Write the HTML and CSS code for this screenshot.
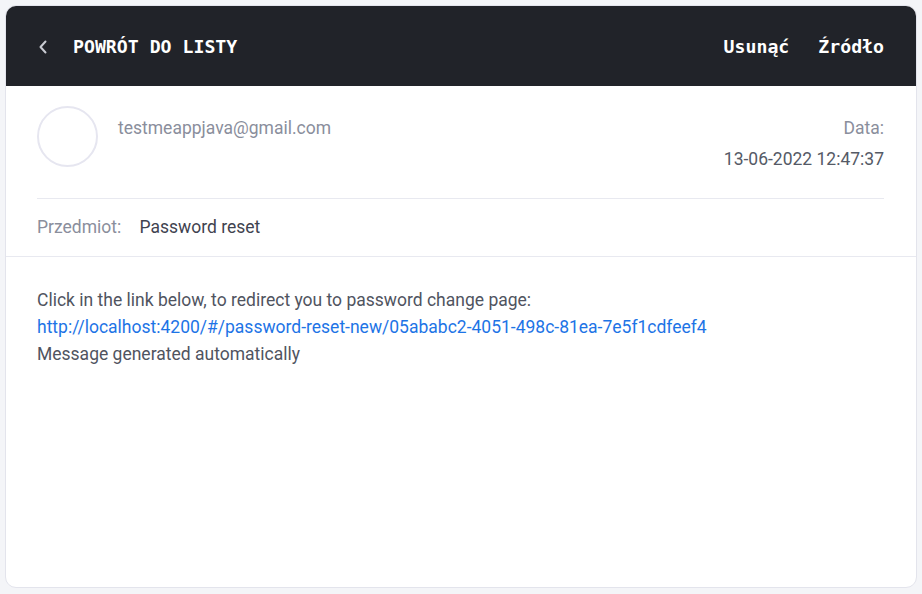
FILE: index.html
```html
<!DOCTYPE html>
<html lang="pl">
<head>
<meta charset="utf-8">
<title>Wiadomość</title>
<link rel="stylesheet" href="styles.css">
</head>
<body>
<div class="card">
  <header class="topbar">
    <a class="back" href="#">
      <svg class="chev" width="10" height="14" viewBox="0 0 10 14"><path d="M7.5 1.5 L2.5 7 L7.5 12.5" fill="none" stroke="#c9cbd2" stroke-width="2" stroke-linecap="round" stroke-linejoin="round"/></svg>
      <span>POWRÓT DO LISTY</span>
    </a>
    <nav class="actions">
      <a href="#">Usunąć</a>
      <a href="#">Źródło</a>
    </nav>
  </header>
  <section class="meta">
    <div class="sender">
      <div class="avatar"></div>
      <div class="from">testmeappjava@gmail.com</div>
      <div class="date">
        <div class="date-label">Data:</div>
        <div class="date-value">13-06-2022 12:47:37</div>
      </div>
    </div>
    <div class="subject">
      <span class="subject-label">Przedmiot:</span>
      <span class="subject-value">Password reset</span>
    </div>
  </section>
  <section class="message">
    <div>Click in the link below, to redirect you to password change page:</div>
    <div><a href="#">http://localhost:4200/#/password-reset-new/05ababc2-4051-498c-81ea-7e5f1cdfeef4</a></div>
    <div>Message generated automatically</div>
  </section>
</div>
</body>
</html>
```
FILE: styles.css
```css
html, body {
  margin: 0;
  padding: 0;
  background: #f4f5f8;
}
body {
  padding: 5px 5px 6px 5px;
  font-family: Roboto, "Noto Sans", sans-serif;
  font-size: 17.5px;
  box-sizing: border-box;
  height: 594px;
}
.card {
  background: #fff;
  border: 1px solid #e3e4ec;
  border-radius: 11px;
  height: 583px;
  box-sizing: border-box;
  overflow: hidden;
  display: flex;
  flex-direction: column;
}
.topbar {
  background: #212329;
  height: 80px;
  display: flex;
  align-items: center;
  justify-content: space-between;
  padding: 0 32px 0 32px;
  flex-shrink: 0;
}
.topbar a {
  color: #ffffff;
  text-decoration: none;
  font-family: "DejaVu Sans Mono", monospace;
  font-weight: bold;
  font-size: 18.2px;
}
.back {
  display: flex;
  align-items: center;
}
.chev {
  margin-right: 25px;
  margin-top: 1px;
}
.actions {
  display: flex;
  gap: 29px;
}
.meta {
  padding: 20px 32px 0 31px;
}
.sender {
  display: flex;
  align-items: flex-start;
  height: 93px;
  box-sizing: border-box;
  border-bottom: 1px solid #e8e9f0;
}
.avatar {
  width: 57px;
  height: 57px;
  border: 2px solid #e6e6f0;
  border-radius: 50%;
  flex-shrink: 0;
  margin-right: 20px;
}
.from {
  color: #8a8e9c;
  line-height: 24px;
  margin-top: 10px;
  flex: 1;
}
.date {
  text-align: right;
  margin-top: 10px;
  line-height: 24px;
}
.date-label {
  color: #8a8e9c;
}
.date-value {
  color: #555a66;
  margin-top: 7px;
}
.subject {
  padding: 16px 0 17px 0;
  line-height: 24px;
}
.subject-label {
  color: #8a8e9c;
  margin-right: 14px;
}
.subject-value {
  color: #3f4350;
}
.message {
  border-top: 1px solid #e8e9f0;
  padding: 30px 31px;
  color: #50545f;
  line-height: 27px;
}
.message a {
  color: #1d74e6;
  text-decoration: none;
}
```
